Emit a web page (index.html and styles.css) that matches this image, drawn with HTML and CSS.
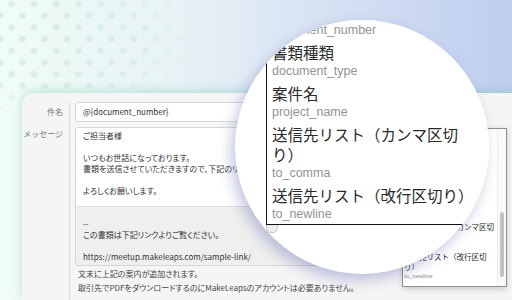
FILE: index.html
```html
<!DOCTYPE html>
<html>
<head>
<meta charset="utf-8" />
<link rel="stylesheet" href="styles.css">
<title>メッセージ設定</title>
</head>
<body>

<div class="dots"></div>

<div class="card">
  <div class="label label-subject">件名</div>
  <div class="field field-subject">
    <div class="input">@{document_number}</div>
  </div>

  <div class="label label-message">メッセージ</div>
  <div class="field">
    <div class="message">
      <div class="message-body">
        <div>ご担当者様</div>
        <div>&nbsp;</div>
        <div>いつもお世話になっております。</div>
        <div>書類を送信させていただきますので、下記のリンクよりご確認ください。</div>
        <div>&nbsp;</div>
        <div>よろしくお願いします。</div>
      </div>
      <div class="message-footer">
        <div>--</div>
        <div>この書類は下記リンクよりご覧ください。</div>
        <div>&nbsp;</div>
        <div>https://meetup.makeleaps.com/sample-link/</div>
      </div>
    </div>
    <p class="note">文末に上記の案内が追加されます。</p>
    <p class="note">取引先でPDFをダウンロードするのにMakeLeapsのアカウントは必要ありません。</p>
  </div>
</div>

<!-- the real dropdown -->
<div class="picker">
  <div class="mini-list">
    <div class="mini-item"><div class="mini-title">発行日</div><div class="mini-code">date</div></div>
    <div class="mini-item"><div class="mini-title">書類番号</div><div class="mini-code">document_number</div></div>
    <div class="mini-item"><div class="mini-title">書類種類</div><div class="mini-code">document_type</div></div>
    <div class="mini-item"><div class="mini-title">案件名</div><div class="mini-code">project_name</div></div>
    <div class="mini-item"><div class="mini-title">送信先リスト（カンマ区切<br>り）</div><div class="mini-code">to_comma</div></div>
    <div class="mini-item"><div class="mini-title">送信先リスト（改行区切<br>り）</div><div class="mini-code">to_newline</div></div>
  </div>
  <div class="track"><div class="thumb"></div></div>
</div>

<!-- magnifier -->
<div class="lens">
  <div class="lens-corner"></div>
  <div class="zoom-list">
    <div class="zoom-item"><div class="zoom-title">書類番号</div><div class="zoom-code">document_number</div></div>
    <div class="zoom-item"><div class="zoom-title">書類種類</div><div class="zoom-code">document_type</div></div>
    <div class="zoom-item"><div class="zoom-title">案件名</div><div class="zoom-code">project_name</div></div>
    <div class="zoom-item"><div class="zoom-title">送信先リスト（カンマ区切<br>り）</div><div class="zoom-code">to_comma</div></div>
    <div class="zoom-item"><div class="zoom-title">送信先リスト（改行区切り）</div><div class="zoom-code">to_newline</div></div>
  </div>
</div>

</body>
</html>
```

FILE: styles.css
```css
html, body
{
	margin: 0;
	padding: 0;
}

body
{
	width: 512px;
	height: 300px;
	overflow: hidden;
	position: relative;
	background: linear-gradient(90deg, #effcf7 0%, #e7f2f5 35%, #d5e1f3 65%, #c0cdee 100%);
	font-family: "Noto Sans CJK JP", "Liberation Sans", sans-serif;
}

/* dotted pattern in the corner */
.dots
{
	position: absolute;
	left: 0;
	top: 0;
	width: 240px;
	height: 110px;
	background-image:
		radial-gradient(circle, #d8efe4 3px, transparent 3.6px),
		radial-gradient(circle, #d8efe4 3px, transparent 3.6px);
	background-size: 22.3px 23.4px;
	background-position: 0.5px -7.7px, 11.2px 4px;
	-webkit-mask-image: radial-gradient(ellipse 140px 85px at 60px 40px, #000 55%, transparent 100%);
	mask-image: radial-gradient(ellipse 140px 85px at 60px 40px, #000 55%, transparent 100%);
}

/* form card */
.card
{
	position: relative;
	margin: 93px 0 0 22px;
	width: 500px;
	height: 207px;
	box-sizing: border-box;
	padding-top: 9px;
	background: #f5f5f5;
	border-top-left-radius: 12px;
	box-shadow: 0 -2px 9px rgba(90, 185, 155, 0.35);
	display: grid;
	grid-template-columns: 48px 380px;
	grid-template-rows: auto 1fr;
	column-gap: 5px;
}

.label
{
	font-size: 8px;
	color: #777;
	text-align: right;
	padding-right: 6px;
	border-right: 1px solid #dcdcdc;
}

.label-subject
{
	line-height: 20px;
	padding-bottom: 5px;
}

.label-message
{
	line-height: 14px;
}

.field-subject
{
	padding-bottom: 5px;
}

.input
{
	height: 20px;
	box-sizing: border-box;
	border: 1px solid #d6d6d6;
	border-radius: 3px;
	background: #fff;
	padding: 0 7px;
	line-height: 18px;
	font-size: 8px;
	color: #333;
}

.message
{
	border: 1px solid #d6d6d6;
	border-radius: 3px;
	overflow: hidden;
	font-size: 8px;
	line-height: 11px;
	color: #333;
	white-space: nowrap;
	font-feature-settings: "palt";
}

.message-body
{
	background: #fff;
	height: 78px;
	box-sizing: border-box;
	padding: 2px 7px 0;
}

.message-footer
{
	background: #efefef;
	border-top: 1px solid #dedede;
	padding: 11px 7px 3px;
}

.note
{
	margin: 2px 0 0;
	padding-left: 3px;
	font-size: 8px;
	line-height: 12px;
	color: #444;
	white-space: nowrap;
	font-feature-settings: "palt";
}

/* small dropdown */
.picker
{
	position: absolute;
	left: 402px;
	top: 128px;
	width: 105px;
	height: 159px;
	box-sizing: border-box;
	border: 1px solid #8e8e8e;
	background: #fff;
	box-shadow: 0 2px 6px rgba(0, 0, 0, 0.18);
	overflow: hidden;
	display: flex;
}

.mini-list
{
	flex: 1;
	min-width: 0;
	margin-top: 12px;
	padding-left: 1px;
}

.mini-item
{
	padding-top: 1px;
}

.mini-title
{
	white-space: nowrap;
	font-size: 7.5px;
	line-height: 10px;
	color: #222;
}

.mini-code
{
	font-family: "Liberation Sans", sans-serif;
	font-size: 6px;
	line-height: 9px;
	color: #888;
}

.track
{
	width: 8px;
	flex: none;
	border-left: 1px solid #ececec;
	background: #fafafa;
}

.thumb
{
	margin: 83px 0 0 1.5px;
	width: 4px;
	height: 65px;
	border-radius: 2px;
	background: #c2c2c2;
}

/* magnifier lens */
.lens
{
	position: absolute;
	left: 235px;
	top: 20px;
	width: 254px;
	height: 254px;
	border-radius: 50%;
	background: #fff;
	overflow: hidden;
	box-shadow: -4px 6px 14px rgba(80, 90, 170, 0.35);
}

.lens-corner
{
	position: absolute;
	left: 31px;
	top: 190px;
	width: 12px;
	height: 23px;
	box-sizing: border-box;
	border: 1px solid #c8c8c8;
	border-radius: 0 0 5px 5px;
	background: #eeeeee;
}

.zoom-list
{
	position: absolute;
	left: 31px;
	top: -21px;
	width: 300px;
	background: #fff;
	border-left: 1.5px solid #111;
	border-bottom: 1.5px solid #111;
}

.zoom-item
{
	padding: 2px 0 1px 5px;
}

.zoom-title
{
	white-space: nowrap;
	font-size: 15.5px;
	line-height: 20px;
	color: #2a2a2a;
}

.zoom-code
{
	font-family: "Liberation Sans", sans-serif;
	font-size: 12.5px;
	line-height: 18px;
	color: #939393;
}
```
